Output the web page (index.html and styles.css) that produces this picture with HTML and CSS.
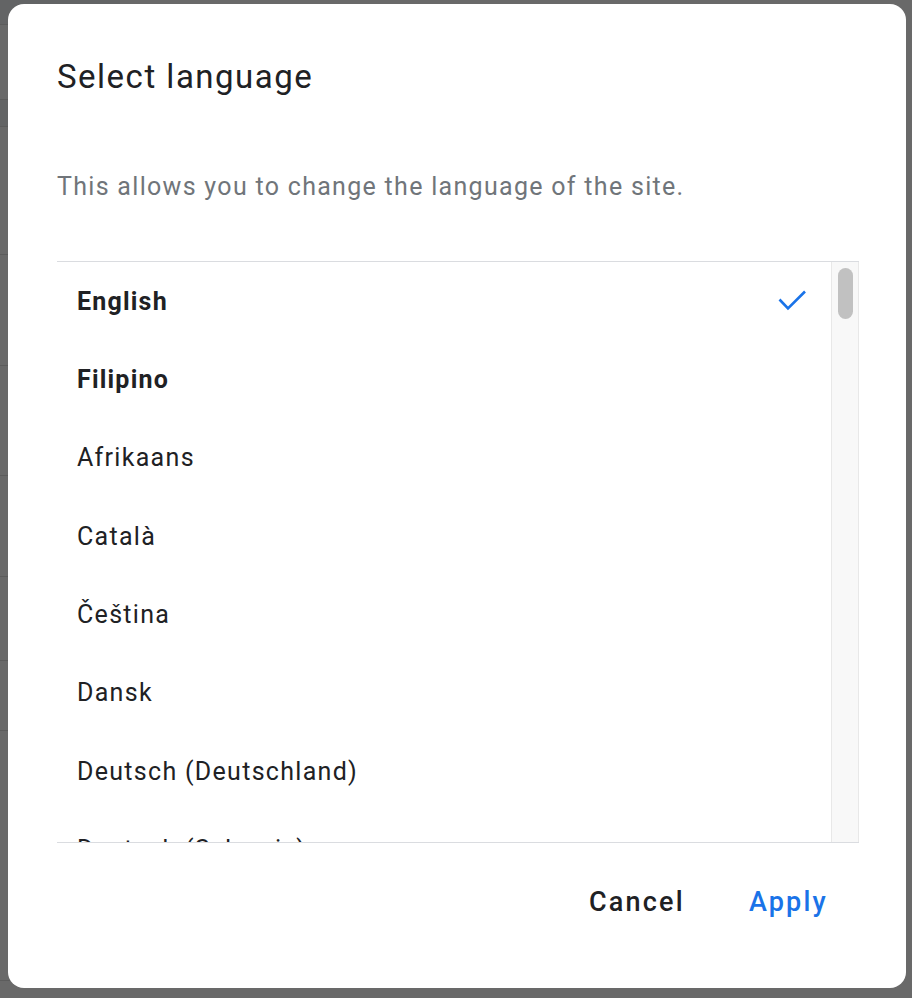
FILE: index.html
```html
<!DOCTYPE html>
<html lang="en">
<head>
<meta charset="utf-8">
<title>Select language</title>
<link rel="stylesheet" href="styles.css">
</head>
<body>
<div class="page">
  <div class="page-col">
    <div class="prow r1"></div>
    <div class="prow r2"></div>
    <div class="prow r3"></div>
    <div class="prow r4"></div>
    <div class="prow r5"></div>
    <div class="prow r6"></div>
    <div class="prow r7"></div>
    <div class="prow r8"></div>
    <div class="prow r9"></div>
    <div class="prow r10"></div>
  </div>
</div>
<div class="scrim"></div>
<div class="dialog" role="dialog" aria-labelledby="dlg-title">
  <h1 class="title" id="dlg-title">Select language</h1>
  <p class="desc">This allows you to change the language of the site.</p>
  <div class="listbox">
    <ul class="list">
      <li class="item bold selected"><span>English</span>
        <svg class="check" width="28" height="22" viewBox="0 0 28 22"><polyline points="1.5,9.5 10,18.5 27,1.5" fill="none" stroke="#1a73e8" stroke-width="2.6"/></svg>
      </li>
      <li class="item bold"><span>Filipino</span></li>
      <li class="item"><span>Afrikaans</span></li>
      <li class="item"><span>Català</span></li>
      <li class="item"><span>Čeština</span></li>
      <li class="item"><span>Dansk</span></li>
      <li class="item"><span>Deutsch (Deutschland)</span></li>
      <li class="item"><span>Deutsch (Schweiz)</span></li>
    </ul>
    <div class="scrollbar" aria-hidden="true">
      <div class="thumb"></div>
    </div>
  </div>
  <div class="actions">
    <button class="btn cancel" type="button">Cancel</button>
    <button class="btn apply" type="button">Apply</button>
  </div>
</div>
</body>
</html>
```
FILE: styles.css
```css
html, body {
  margin: 0;
  padding: 0;
  height: 100%;
}
body {
  background: #ffffff;
  font-family: Roboto, "Noto Sans", sans-serif;
  overflow: hidden;
}
.page {
  height: 100%;
}
.page-col {
  width: 120px;
}
.prow {
  border-bottom: 1px solid #e0e0e0;
  box-sizing: border-box;
}
.r1 { height: 25px; background: #f1f3f4; }
.r2 { height: 75px; }
.r3 { height: 27px; background: #f1f3f4; }
.r4 { height: 128px; }
.r5 { height: 111px; }
.r6 { height: 110px; }
.r7 { height: 101px; }
.r8 { height: 84px; }
.r9 { height: 70px; }
.r10 { height: 250px; }

.scrim {
  position: fixed;
  inset: 0;
  background: rgba(0, 0, 0, 0.59);
}
.dialog {
  position: absolute;
  top: 4px;
  left: 8px;
  width: 898px;
  height: 984px;
  box-sizing: border-box;
  background: #ffffff;
  border-radius: 16px;
  padding: 53px 47px 0 49px;
  display: flex;
  flex-direction: column;
}
.title {
  margin: 0;
  font-family: Roboto, sans-serif;
  font-weight: 400;
  font-size: 33px;
  line-height: 40px;
  letter-spacing: 1.5px;
  color: #202124;
}
.desc {
  margin: 74px 0 0 0;
  font-size: 25px;
  line-height: 32px;
  letter-spacing: 1.3px;
  color: #70757a;
}
.listbox {
  margin-top: 58px;
  height: 582px;
  box-sizing: border-box;
  border-top: 1.5px solid #dadce0;
  border-bottom: 1.5px solid #dadce0;
  display: flex;
}
.list {
  list-style: none;
  margin: 0;
  padding: 0;
  flex: 1;
  min-width: 0;
  overflow: hidden;
}
.scrollbar {
  width: 28px;
  box-sizing: border-box;
  background: #f8f8f8;
  border-left: 1px solid #e8e8e8;
  border-right: 1px solid #e8e8e8;
  padding: 5.5px 5px 0 6px;
}
.thumb {
  height: 51px;
  border-radius: 8px;
  background: #c1c1c1;
}
.item {
  height: 78.33px;
  display: flex;
  align-items: center;
  justify-content: space-between;
  padding: 0 25px 0 20px;
  font-size: 25px;
  letter-spacing: 1.3px;
  color: #202124;
}
.item.bold {
  font-weight: 700;
  letter-spacing: 1.2px;
}
.check {
  display: block;
}
.actions {
  margin-top: 35px;
  display: flex;
  justify-content: flex-end;
  gap: 32px;
  padding-right: 15px;
}
.btn {
  height: 48px;
  padding: 0 16px;
  border: none;
  background: transparent;
  font-family: Roboto, sans-serif;
  font-weight: 500;
  font-size: 27px;
  letter-spacing: 2.2px;
  cursor: pointer;
}
.cancel {
  color: #202124;
}
.apply {
  color: #1a73e8;
}
```
